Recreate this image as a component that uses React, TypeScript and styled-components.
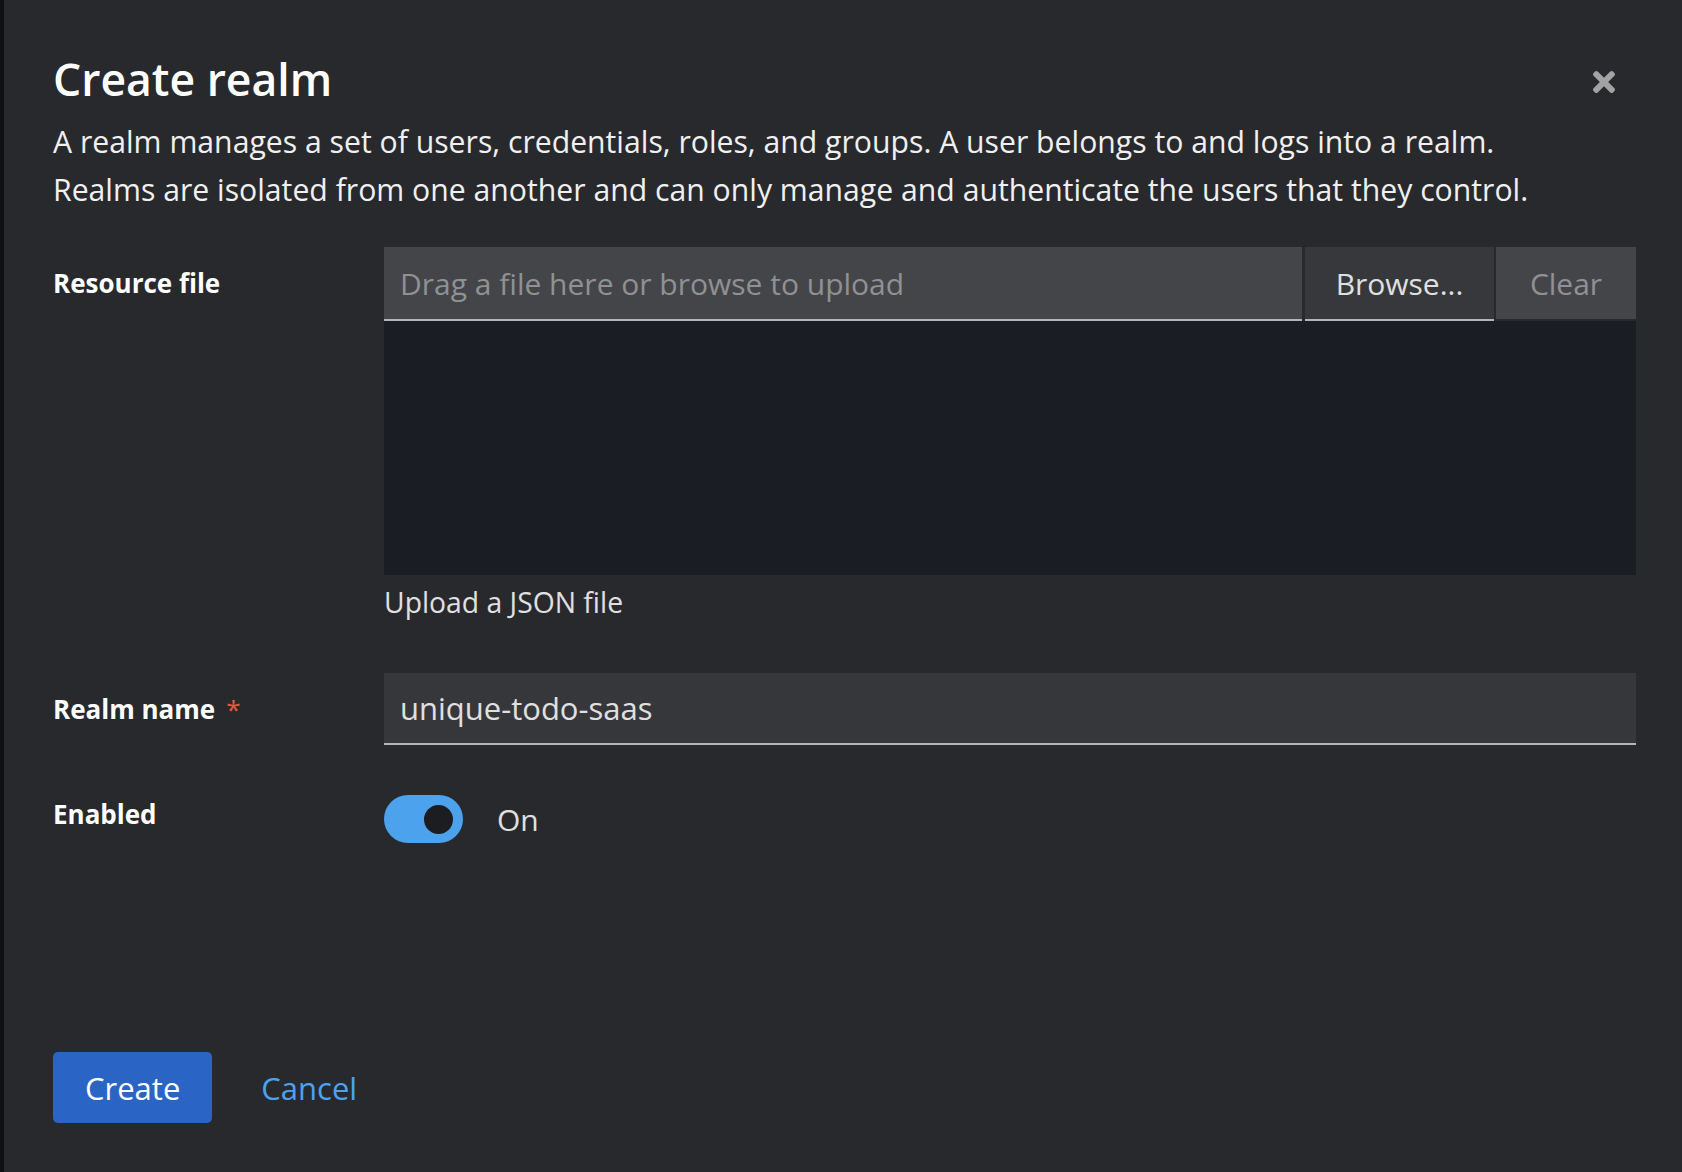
import React from "react";
import styled, { createGlobalStyle } from "styled-components";

const GlobalStyle = createGlobalStyle`
  *, *::before, *::after { box-sizing: border-box; }
  html, body { margin: 0; padding: 0; }
  body {
    background: #0f1012;
    font-family: "Open Sans", "Noto Sans", sans-serif;
    color: #f0f0f0;
  }
`;

const Page = styled.div`
  display: flex;
  min-height: 100vh;
  padding-left: 4px;
`;

const Modal = styled.section`
  position: relative;
  flex: 1;
  display: flex;
  flex-direction: column;
  background: #28292d;
  padding: 49px 46px 49px 49px;
`;

const Title = styled.h1`
  margin: 0;
  font-size: 44.5px;
  font-weight: 600;
  line-height: 60px;
  color: #ffffff;
`;

const CloseButton = styled.button`
  position: absolute;
  top: 60px;
  right: 56px;
  width: 44px;
  height: 44px;
  display: flex;
  align-items: center;
  justify-content: center;
  border: none;
  background: transparent;
  padding: 0;
  color: #a3a3a3;
  cursor: pointer;
`;

const Description = styled.p`
  margin: 9px 0 0;
  font-size: 30.2px;
  line-height: 48px;
  color: #f0f0f0;
`;

const Form = styled.form`
  display: grid;
  grid-template-columns: 331px 1fr;
  row-gap: 50px;
  margin-top: 33px;
`;

const Label = styled.label<{ $offset: number }>`
  padding-top: ${(p) => p.$offset}px;
  font-size: 26px;
  font-weight: 700;
  line-height: 39px;
  color: #ffffff;
`;

const Required = styled.span`
  margin-left: 11px;
  color: #f0563f;
  font-weight: 400;
`;

const Control = styled.div`
  display: flex;
  flex-direction: column;
`;

const FileRow = styled.div`
  display: flex;
  align-items: flex-start;
  height: 74px;
`;

const FileName = styled.input`
  flex: 1;
  min-width: 0;
  height: 74px;
  padding: 0 16px;
  border: none;
  border-bottom: 2px solid #b4b5b7;
  background: #444549;
  font-family: inherit;
  font-size: 30px;
  color: #e0e0e0;
  outline: none;
  &::placeholder { color: #8f9194; }
`;

const FileButton = styled.button<{ $variant: "browse" | "clear" }>`
  flex: none;
  width: ${(p) => (p.$variant === "browse" ? 189 : 140)}px;
  height: ${(p) => (p.$variant === "browse" ? 74 : 72)}px;
  margin-left: ${(p) => (p.$variant === "browse" ? 3 : 2)}px;
  padding: 0;
  border: none;
  border-bottom: ${(p) => (p.$variant === "browse" ? "2px solid #b4b5b7" : "none")};
  background: ${(p) => (p.$variant === "browse" ? "#37383c" : "#444549")};
  font-family: inherit;
  font-size: 30px;
  color: ${(p) => (p.$variant === "browse" ? "#e0e0e0" : "#8f9194")};
  cursor: pointer;
`;

const FileArea = styled.textarea`
  display: block;
  width: 100%;
  height: 254px;
  margin: 0;
  border: none;
  resize: none;
  background: #1b1d24;
  outline: none;
`;

const Helper = styled.div`
  margin-top: 6px;
  font-size: 28.3px;
  line-height: 42px;
  color: #e0e0e0;
`;

const TextInput = styled.input`
  width: 100%;
  height: 72px;
  padding: 0 16px;
  border: none;
  border-bottom: 2px solid #b4b5b7;
  background: #36373b;
  font-family: inherit;
  font-size: 31px;
  color: #e0e0e0;
  outline: none;
`;

const SwitchRow = styled.label`
  display: flex;
  align-items: center;
  height: 48px;
  cursor: pointer;
`;

const Track = styled.span<{ $on: boolean }>`
  display: flex;
  align-items: center;
  justify-content: ${(p) => (p.$on ? "flex-end" : "flex-start")};
  width: 79px;
  height: 48px;
  padding: 0 10px;
  border-radius: 24px;
  background: ${(p) => (p.$on ? "#4ca2ec" : "#6a6e73")};
`;

const Knob = styled.span`
  width: 29px;
  height: 29px;
  border-radius: 50%;
  background: #1b1d21;
`;

const SwitchText = styled.span`
  margin-left: 34px;
  font-size: 30px;
  color: #e0e0e0;
`;

const Footer = styled.footer`
  margin-top: auto;
  display: flex;
  align-items: center;
  gap: 17px;
`;

const Button = styled.button<{ $kind: "primary" | "link" }>`
  height: 71px;
  padding: 0 32px;
  border: none;
  border-radius: 5px;
  background: ${(p) => (p.$kind === "primary" ? "#2a65c6" : "transparent")};
  color: ${(p) => (p.$kind === "primary" ? "#ffffff" : "#4ca2ec")};
  font-family: inherit;
  font-size: 31px;
  cursor: pointer;
`;

const CloseIcon = () => (
  <svg width="22" height="22" viewBox="0 80 352 352" fill="currentColor" aria-hidden="true">
    <path d="M242.72 256l100.07-100.07c12.28-12.28 12.28-32.19 0-44.48l-22.24-22.24c-12.28-12.28-32.19-12.28-44.48 0L176 189.28 75.93 89.21c-12.280-12.28-32.19-12.28-44.48 0L9.21 111.45c-12.28 12.28-12.28 32.19 0 44.48L109.28 256 9.21 356.07c-12.28 12.28-12.28 32.19 0 44.48l22.24 22.24c12.28 12.28 32.2 12.28 44.48 0L176 322.72l100.07 100.07c12.28 12.28 32.2 12.28 44.48 0l22.24-22.24c12.28-12.28 12.28-32.19 0-44.48L242.72 256z" />
  </svg>
);

export default function App() {
  const on = true;
  return (
    <>
      <GlobalStyle />
      <Page>
        <Modal>
          <Title>Create realm</Title>
          <CloseButton aria-label="Close">
            <CloseIcon />
          </CloseButton>
          <Description>
            A realm manages a set of users, credentials, roles, and groups. A user belongs to and logs into a realm.
            <br />
            Realms are isolated from one another and can only manage and authenticate the users that they control.
          </Description>
          <Form onSubmit={(e) => e.preventDefault()}>
            <Label $offset={17}>Resource file</Label>
            <Control>
              <FileRow>
                <FileName readOnly placeholder="Drag a file here or browse to upload" />
                <FileButton type="button" $variant="browse">Browse...</FileButton>
                <FileButton type="button" $variant="clear">Clear</FileButton>
              </FileRow>
              <FileArea readOnly />
              <Helper>Upload a JSON file</Helper>
            </Control>

            <Label $offset={17}>
              Realm name<Required>*</Required>
            </Label>
            <Control>
              <TextInput defaultValue="unique-todo-saas" />
            </Control>

            <Label $offset={0}>Enabled</Label>
            <Control>
              <SwitchRow>
                <Track $on={on}>
                  <Knob />
                </Track>
                <SwitchText>On</SwitchText>
              </SwitchRow>
            </Control>
          </Form>
          <Footer>
            <Button $kind="primary">Create</Button>
            <Button $kind="link">Cancel</Button>
          </Footer>
        </Modal>
      </Page>
    </>
  );
}
